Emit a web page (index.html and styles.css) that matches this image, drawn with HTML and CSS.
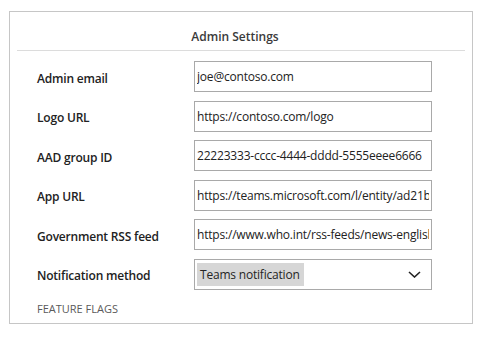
FILE: index.html
```html
<!DOCTYPE html>
<html lang="en">
<head>
    <meta charset="UTF-8">
    <meta name="viewport" content="width=device-width, initial-scale=1.0">
    <title>Admin Settings</title>

    <link rel="stylesheet" href="styles.css">
</head>
<body>
    <div class="settings-panel">
        <header class="panel-title">Admin Settings</header>
        <form class="settings-form">
            <div class="form-row">
                <label for="adminEmail">Admin email</label>
                <input type="text" id="adminEmail" value="joe@contoso.com">
            </div>
            <div class="form-row">
                <label for="logoUrl">Logo URL</label>
                <input type="text" id="logoUrl" value="https://contoso.com/logo">
            </div>
            <div class="form-row">
                <label for="groupId">AAD group ID</label>
                <input type="text" id="groupId" value="22223333-cccc-4444-dddd-5555eeee6666">
            </div>
            <div class="form-row">
                <label for="appUrl">App URL</label>
                <input type="text" id="appUrl" value="https://teams.microsoft.com/l/entity/ad21b4c3-5d2e-4b8a">
            </div>
            <div class="form-row">
                <label for="rssFeed">Government RSS feed</label>
                <input type="text" id="rssFeed" value="https://www.who.int/rss-feeds/news-english.xml">
            </div>
            <div class="form-row">
                <label>Notification method</label>
                <div class="dropdown">
                    <span class="dropdown-value">Teams notification</span>
                    <svg class="chevron" width="13" height="7" viewBox="0 0 13 7">
                        <path d="M1 1 L6.5 6 L12 1" fill="none" stroke="#222" stroke-width="1.6"/>
                    </svg>
                </div>
            </div>
        </form>
        <div class="section-heading">FEATURE FLAGS</div>
    </div>
</body>
</html>
```

FILE: styles.css
```css
body {
    font-family: 'Open Sans', 'Noto Sans', sans-serif;
    background-color: white;
    color: #252525;
    margin: 0;
    padding: 11px 13px 0 9px;
}
.settings-panel {
    border: 1px solid #c6c6c6;
    padding: 0 7px 0 7px;
    height: 311px;
}
.panel-title {
    font-size: 12px;
    font-weight: 600;
    color: #3a3a3a;
    text-align: center;
    padding: 16px 12px 0 0;
    height: 22px;
    border-bottom: 1px solid #dcdcdc;
}
.settings-form {
    padding: 10px 0 0 20px;
}
.form-row {
    display: flex;
    align-items: center;
    height: 31px;
    margin-bottom: 8.5px;
}
.form-row label {
    width: 157px;
    font-size: 12px;
    font-weight: 600;
    letter-spacing: -0.2px;
    color: #222;
    padding-top: 3px;
}
.form-row input {
    width: 238px;
    height: 31px;
    box-sizing: border-box;
    border: 1px solid #a9a9a9;
    padding: 0 2px;
    font-family: inherit;
    font-size: 12px;
    letter-spacing: -0.2px;
    color: #222;
    outline: none;
}
/* Dropdown */
.dropdown {
    width: 238px;
    height: 31px;
    box-sizing: border-box;
    border: 1px solid #a9a9a9;
    display: flex;
    align-items: center;
    justify-content: space-between;
    padding: 3px 10px 3px 2px;
}
.dropdown-value {
    background-color: #d6d6d6;
    font-size: 12px;
    letter-spacing: -0.2px;
    line-height: 23px;
    padding: 0 4px 0 3px;
}
.section-heading {
    font-size: 11px;
    color: #5a5a5a;
    padding: 3px 0 0 20px;
}
```
